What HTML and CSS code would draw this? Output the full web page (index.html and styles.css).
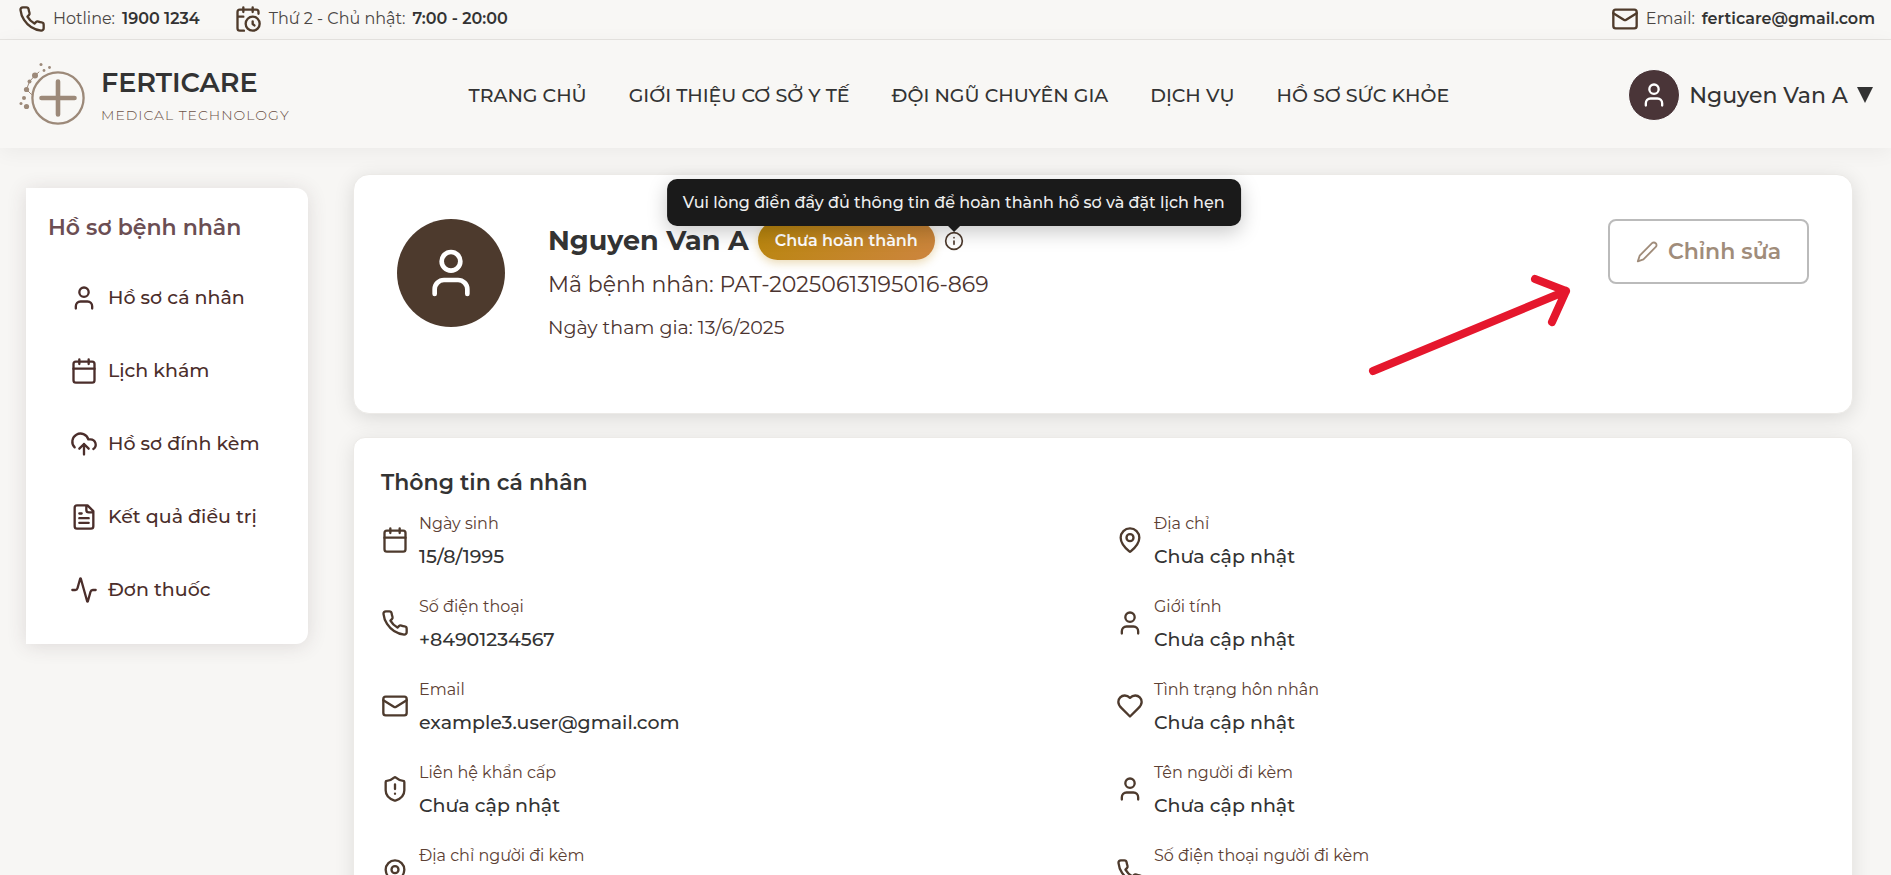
FILE: index.html
```html
<!DOCTYPE html>
<html lang="vi">
<head>
<meta charset="utf-8">
<meta name="viewport" content="width=device-width, initial-scale=1">
<title>Ferticare - Hồ sơ bệnh nhân</title>
<link rel="stylesheet" href="styles.css">
</head>
<body>
<svg class="sprite" aria-hidden="true">
  <symbol id="i-phone" viewBox="0 0 24 24"><path d="M22 16.92v3a2 2 0 0 1-2.18 2 19.79 19.79 0 0 1-8.63-3.07 19.5 19.5 0 0 1-6-6 19.79 19.79 0 0 1-3.07-8.67A2 2 0 0 1 4.11 2h3a2 2 0 0 1 2 1.72 12.84 12.84 0 0 0 .7 2.81 2 2 0 0 1-.45 2.11L8.09 9.91a16 16 0 0 0 6 6l1.27-1.27a2 2 0 0 1 2.11-.45 12.84 12.84 0 0 0 2.81.7A2 2 0 0 1 22 16.92z"/></symbol>
  <symbol id="i-calclock" viewBox="0 0 24 24"><path d="M21 7.5V6a2 2 0 0 0-2-2H5a2 2 0 0 0-2 2v14a2 2 0 0 0 2 2h3.5M16 2v4M8 2v4M3 10h5M17.500 17.500 16 16.300V14"/><circle cx="16" cy="16" r="6"/></symbol>
  <symbol id="i-mail" viewBox="0 0 24 24"><rect x="2" y="4" width="20" height="16" rx="2"/><path d="m22 7-8.970 5.700a1.940 1.940 0 0 1-2.060 0L2 7"/></symbol>
  <symbol id="i-user" viewBox="0 0 24 24"><path d="M19 21v-2a4 4 0 0 0-4-4H9a4 4 0 0 0-4 4v2"/><circle cx="12" cy="7" r="4"/></symbol>
  <symbol id="i-calendar" viewBox="0 0 24 24"><rect x="3" y="4" width="18" height="18" rx="2"/><path d="M8 2v4M16 2v4M3 10h18"/></symbol>
  <symbol id="i-upload" viewBox="0 0 24 24"><path d="M4 14.899A7 7 0 1 1 15.710 8h1.790a4.500 4.500 0 0 1 2.500 8.242M12 12v9M16 16l-4-4-4 4"/></symbol>
  <symbol id="i-file" viewBox="0 0 24 24"><path d="M15 2H6a2 2 0 0 0-2 2v16a2 2 0 0 0 2 2h12a2 2 0 0 0 2-2V7ZM14 2v4a2 2 0 0 0 2 2h4M10 9H8M16 13H8M16 17H8"/></symbol>
  <symbol id="i-activity" viewBox="0 0 24 24"><path d="M22 12h-2.480a2 2 0 0 0-1.930 1.460l-2.350 8.360a.25.25 0 0 1-.48 0L9.240 2.180a.25.25 0 0 0-.48 0l-2.350 8.360A2 2 0 0 1 4.490 12H2"/></symbol>
  <symbol id="i-pin" viewBox="0 0 24 24"><path d="M20 10c0 4.993-5.539 10.193-7.399 11.799a1 1 0 0 1-1.202 0C9.539 20.193 4 14.993 4 10a8 8 0 0 1 16 0"/><circle cx="12" cy="10" r="3"/></symbol>
  <symbol id="i-heart" viewBox="0 0 24 24"><path d="M19 14c1.490-1.460 3-3.210 3-5.500A5.500 5.500 0 0 0 16.500 3c-1.760 0-3 .5-4.500 2-1.500-1.500-2.740-2-4.500-2A5.500 5.500 0 0 0 2 8.500c0 2.300 1.500 4.050 3 5.500l7 7Z"/></symbol>
  <symbol id="i-shield" viewBox="0 0 24 24"><path d="M20 13c0 5-3.500 7.500-7.660 8.950a1 1 0 0 1-.67-.01C7.500 20.500 4 18 4 13V6a1 1 0 0 1 1-1c2 0 4.500-1.200 6.240-2.720a1.170 1.170 0 0 1 1.520 0C14.510 3.810 17 5 19 5a1 1 0 0 1 1 1zM12 8v4M12 16h.01"/></symbol>
  <symbol id="i-info" viewBox="0 0 24 24"><circle cx="12" cy="12" r="10"/><path d="M12 16v-4M12 8h.01"/></symbol>
  <symbol id="i-pencil" viewBox="0 0 24 24"><path d="M21.500 2.500a2.800 2.800 0 0 0-4-.1L4 16 2 22.200l6.100-2.100L21.600 6.500a2.800 2.800 0 0 0-.1-4z"/></symbol>
</svg>

<div class="topbar">
  <div class="topbar-group">
    <span class="contact"><svg class="icon"><use href="#i-phone"/></svg>Hotline: <strong>1900 1234</strong></span>
    <span class="contact"><svg class="icon"><use href="#i-calclock"/></svg>Thứ 2 - Chủ nhật: <strong>7:00 - 20:00</strong></span>
  </div>
  <span class="contact"><svg class="icon"><use href="#i-mail"/></svg>Email: <strong>ferticare@gmail.com</strong></span>
</div>

<header class="header">
  <a class="brand" href="#">
    <svg class="brand-mark" viewBox="0 0 70 70" aria-hidden="true">
      <g fill="none" stroke="#9c8979" stroke-linecap="round">
        <circle cx="40" cy="38" r="25.600" stroke-width="2.300"/>
        <path d="M40 21.500v33M23.500 38h33" stroke-width="4.600"/>
        <path d="M17 15.500 11.500 21.500 8.500 29.500 13.500 34.500M17 15.500l4-3.500" stroke-width="1"/>
      </g>
      <g fill="#9c8979">
        <circle cx="17" cy="15.500" r="3"/><circle cx="11.500" cy="21.500" r="2"/><circle cx="8.500" cy="29.500" r="2.600"/>
        <circle cx="6" cy="38" r="2"/><circle cx="3" cy="43.500" r="1.500"/><circle cx="8.500" cy="46.500" r="2.600"/>
        <circle cx="23" cy="4.500" r="1.500"/><circle cx="26" cy="10.500" r="1.400"/><circle cx="31.500" cy="7.500" r="1.400"/>
      </g>
    </svg>
    <span class="brand-text">
      <span class="brand-name">FERTICARE</span>
      <span class="brand-tag">MEDICAL TECHNOLOGY</span>
    </span>
  </a>
  <nav class="nav">
    <a href="#">TRANG CHỦ</a>
    <a href="#">GIỚI THIỆU CƠ SỞ Y TẾ</a>
    <a href="#">ĐỘI NGŨ CHUYÊN GIA</a>
    <a href="#">DỊCH VỤ</a>
    <a href="#">HỒ SƠ SỨC KHỎE</a>
  </nav>
  <button class="account" type="button">
    <span class="account-avatar"><svg class="icon"><use href="#i-user"/></svg></span>
    <span>Nguyen Van A</span>
    <svg class="caret" viewBox="0 0 16 16" aria-hidden="true"><path d="M0 0h16L8 16z"/></svg>
  </button>
</header>

<div class="layout">
  <aside class="sidebar">
    <h2 class="sidebar-title">Hồ sơ bệnh nhân</h2>
    <nav class="menu">
      <a href="#"><svg class="icon"><use href="#i-user"/></svg>Hồ sơ cá nhân</a>
      <a href="#"><svg class="icon"><use href="#i-calendar"/></svg>Lịch khám</a>
      <a href="#"><svg class="icon"><use href="#i-upload"/></svg>Hồ sơ đính kèm</a>
      <a href="#"><svg class="icon"><use href="#i-file"/></svg>Kết quả điều trị</a>
      <a href="#"><svg class="icon"><use href="#i-activity"/></svg>Đơn thuốc</a>
    </nav>
  </aside>

  <main class="content">
    <section class="profile">
      <div class="profile-avatar"><svg class="icon icon-xl"><use href="#i-user"/></svg></div>
      <div class="profile-text">
        <div class="profile-head">
          <h1 class="profile-name">Nguyen Van A</h1>
          <span class="badge">Chưa hoàn thành</span>
          <span class="hint">
            <svg class="icon icon-sm"><use href="#i-info"/></svg>
            <span class="tooltip" role="tooltip">Vui lòng điền đầy đủ thông tin để hoàn thành hồ sơ và đặt lịch hẹn</span>
          </span>
        </div>
        <p class="profile-code">Mã bệnh nhân: PAT-20250613195016-869</p>
        <p class="profile-date">Ngày tham gia: 13/6/2025</p>
      </div>
      <button class="edit" type="button"><svg class="icon icon-edit"><use href="#i-pencil"/></svg>Chỉnh sửa</button>
      <svg class="pointer" viewBox="0 0 206 104" aria-hidden="true"><path d="M6 98 199 18M168 6l31 12-14 31"/></svg>
    </section>

    <section class="details">
      <h2 class="details-title">Thông tin cá nhân</h2>
      <dl class="fields">
        <div class="field"><svg class="icon"><use href="#i-calendar"/></svg><div><dt>Ngày sinh</dt><dd>15/8/1995</dd></div></div>
        <div class="field"><svg class="icon"><use href="#i-pin"/></svg><div><dt>Địa chỉ</dt><dd>Chưa cập nhật</dd></div></div>
        <div class="field"><svg class="icon"><use href="#i-phone"/></svg><div><dt>Số điện thoại</dt><dd>+84901234567</dd></div></div>
        <div class="field"><svg class="icon"><use href="#i-user"/></svg><div><dt>Giới tính</dt><dd>Chưa cập nhật</dd></div></div>
        <div class="field"><svg class="icon"><use href="#i-mail"/></svg><div><dt>Email</dt><dd>example3.user@gmail.com</dd></div></div>
        <div class="field"><svg class="icon"><use href="#i-heart"/></svg><div><dt>Tình trạng hôn nhân</dt><dd>Chưa cập nhật</dd></div></div>
        <div class="field"><svg class="icon"><use href="#i-shield"/></svg><div><dt>Liên hệ khẩn cấp</dt><dd>Chưa cập nhật</dd></div></div>
        <div class="field"><svg class="icon"><use href="#i-user"/></svg><div><dt>Tên người đi kèm</dt><dd>Chưa cập nhật</dd></div></div>
        <div class="field"><svg class="icon"><use href="#i-pin"/></svg><div><dt>Địa chỉ người đi kèm</dt><dd>Chưa cập nhật</dd></div></div>
        <div class="field"><svg class="icon"><use href="#i-phone"/></svg><div><dt>Số điện thoại người đi kèm</dt><dd>Chưa cập nhật</dd></div></div>
      </dl>
    </section>
  </main>
</div>
</body>
</html>
```

FILE: styles.css
```css
* { box-sizing: border-box; }

html { scrollbar-width: none; }

body {
  margin: 0;
  background: #f7f6f4;
  color: #333;
  font-family: Montserrat, Inter, "Open Sans", sans-serif;
  font-size: 16px;
}

h1, h2, p, dl, dd { margin: 0; }
a { color: inherit; text-decoration: none; }
button { font: inherit; color: inherit; cursor: pointer; }

.sprite { display: none; }

.icon {
  width: 28px;
  height: 28px;
  flex: none;
  fill: none;
  stroke: currentColor;
  stroke-width: 2;
  stroke-linecap: round;
  stroke-linejoin: round;
}
.icon-sm { width: 20px; height: 20px; }
.icon-edit { width: 22px; height: 22px; }
.icon-xl { width: 56px; height: 56px; }

/* Top bar */
.topbar {
  display: flex;
  justify-content: space-between;
  height: 40px;
  padding: 0 16px 2px 18px;
  background: #f8f7f5;
  border-bottom: 1px solid #e6e4e1;
}
.topbar-group { display: flex; gap: 34px; }
.contact {
  display: flex;
  align-items: center;
  gap: 7px;
  color: #4a4644;
}
.contact .icon { color: #4f3b2b; }
.contact strong { font-weight: 600; color: #333; }

/* Header */
.header {
  position: relative;
  display: flex;
  align-items: center;
  justify-content: space-between;
  height: 108px;
  padding: 2px 18px 0;
  background: #f8f7f5;
  box-shadow: 0 4px 20px rgba(0, 0, 0, .05);
}
.brand { display: flex; align-items: center; gap: 13px; }
.brand-mark { width: 70px; height: 70px; }
.brand-text { display: flex; flex-direction: column; gap: 8px; }
.brand-name { font-size: 27px; font-weight: 600; line-height: 32px; }
.brand-tag { font-size: 14px; font-weight: 300; line-height: 16px; letter-spacing: 1px; color: #6b5347; }
.nav { display: flex; gap: 42px; font-size: 19px; font-weight: 500; }
.account {
  display: flex;
  align-items: center;
  gap: 9px;
  padding: 0;
  border: 0;
  background: none;
  font-size: 22px;
  font-weight: 500;
}
.account-avatar {
  display: grid;
  place-items: center;
  width: 52px;
  height: 52px;
  border: 1px solid #fff;
  border-radius: 50%;
  background: #4a3538;
  color: #fff;
}
.caret { width: 16px; height: 16px; fill: #333; }

/* Page layout */
.layout {
  display: flex;
  align-items: flex-start;
  gap: 45px;
  padding: 26px 38px 40px 26px;
}

/* Sidebar */
.sidebar {
  flex: none;
  width: 282px;
  margin-top: 14px;
  padding: 24px 22px 18px;
  border-radius: 0 12px 12px 0;
  background: #fff;
  box-shadow: 0 2px 20px rgba(74, 53, 56, .14);
}
.sidebar-title { font-size: 22px; font-weight: 600; line-height: 32px; color: #6b4e53; }
.menu { display: flex; flex-direction: column; margin-top: 17px; }
.menu a {
  display: flex;
  align-items: center;
  gap: 10px;
  height: 73px;
  padding-left: 22px;
  color: #4b2e2b;
  font-size: 19px;
  font-weight: 500;
}

/* Content */
.content { flex: 1; min-width: 0; display: flex; flex-direction: column; gap: 23px; }

.profile {
  position: relative;
  display: flex;
  align-items: flex-start;
  gap: 43px;
  min-height: 240px;
  padding: 44px 43px;
  border: 1px solid #eceae7;
  border-radius: 16px;
  background: #fff;
  box-shadow: 0 4px 20px rgba(0, 0, 0, .12);
}
.profile-avatar {
  display: grid;
  place-items: center;
  flex: none;
  width: 108px;
  height: 108px;
  border-radius: 50%;
  background: #4d3a2d;
  color: #fff;
}
.profile-text { flex: 1; color: #4b3430; }
.profile-head { display: flex; align-items: center; gap: 9px; height: 43px; }
.profile-name { font-size: 27px; font-weight: 700; color: #333; }
.badge {
  padding: 8px 17px;
  border-radius: 20px;
  background: linear-gradient(135deg, #b8860b, #cd853f);
  box-shadow: 0 3px 10px rgba(184, 134, 11, .3);
  color: #fff;
  font-size: 16px;
  font-weight: 600;
  line-height: 23px;
}
.hint { position: relative; display: flex; color: #4d3a2d; }
.tooltip {
  position: absolute;
  left: 50%;
  bottom: 25px;
  transform: translateX(-50%);
  padding: 12px 16px;
  border-radius: 10px;
  background: #1a1a1a;
  box-shadow: 0 6px 20px rgba(0, 0, 0, .22);
  color: #eee;
  font-size: 16px;
  font-weight: 500;
  line-height: 23px;
  white-space: nowrap;
}
.tooltip::after {
  content: "";
  position: absolute;
  left: 50%;
  top: 100%;
  margin-left: -6px;
  border: 6px solid transparent;
  border-top-color: #1a1a1a;
}
.profile-code { font-size: 22px; line-height: 46px; }
.profile-date { font-size: 19px; line-height: 40px; }
.edit {
  display: flex;
  align-items: center;
  gap: 10px;
  height: 65px;
  padding: 0 26px;
  border: 2px solid #bbb;
  border-radius: 8px;
  background: #fff;
  color: #a08c7a;
  font-size: 22px;
  font-weight: 600;
}
.pointer {
  position: absolute;
  right: 279px;
  top: 98px;
  width: 206px;
  height: 104px;
  fill: none;
  stroke: #e5172d;
  stroke-width: 8;
  stroke-linecap: round;
  stroke-linejoin: round;
}

.details {
  padding: 27px;
  border: 1px solid #eceae7;
  border-radius: 12px;
  background: #fff;
  box-shadow: 0 4px 20px rgba(0, 0, 0, .1);
}
.details-title { font-size: 22px; font-weight: 600; line-height: 36px; }
.fields { display: grid; grid-template-columns: 1fr 1fr; gap: 17px 26px; margin-top: 6px; }
.field { display: flex; align-items: center; gap: 10px; color: #4d3a2d; }
.field dt { font-size: 16px; line-height: 33px; color: #5c4033; }
.field dd { font-size: 19px; font-weight: 500; line-height: 33px; color: #333; }
```
